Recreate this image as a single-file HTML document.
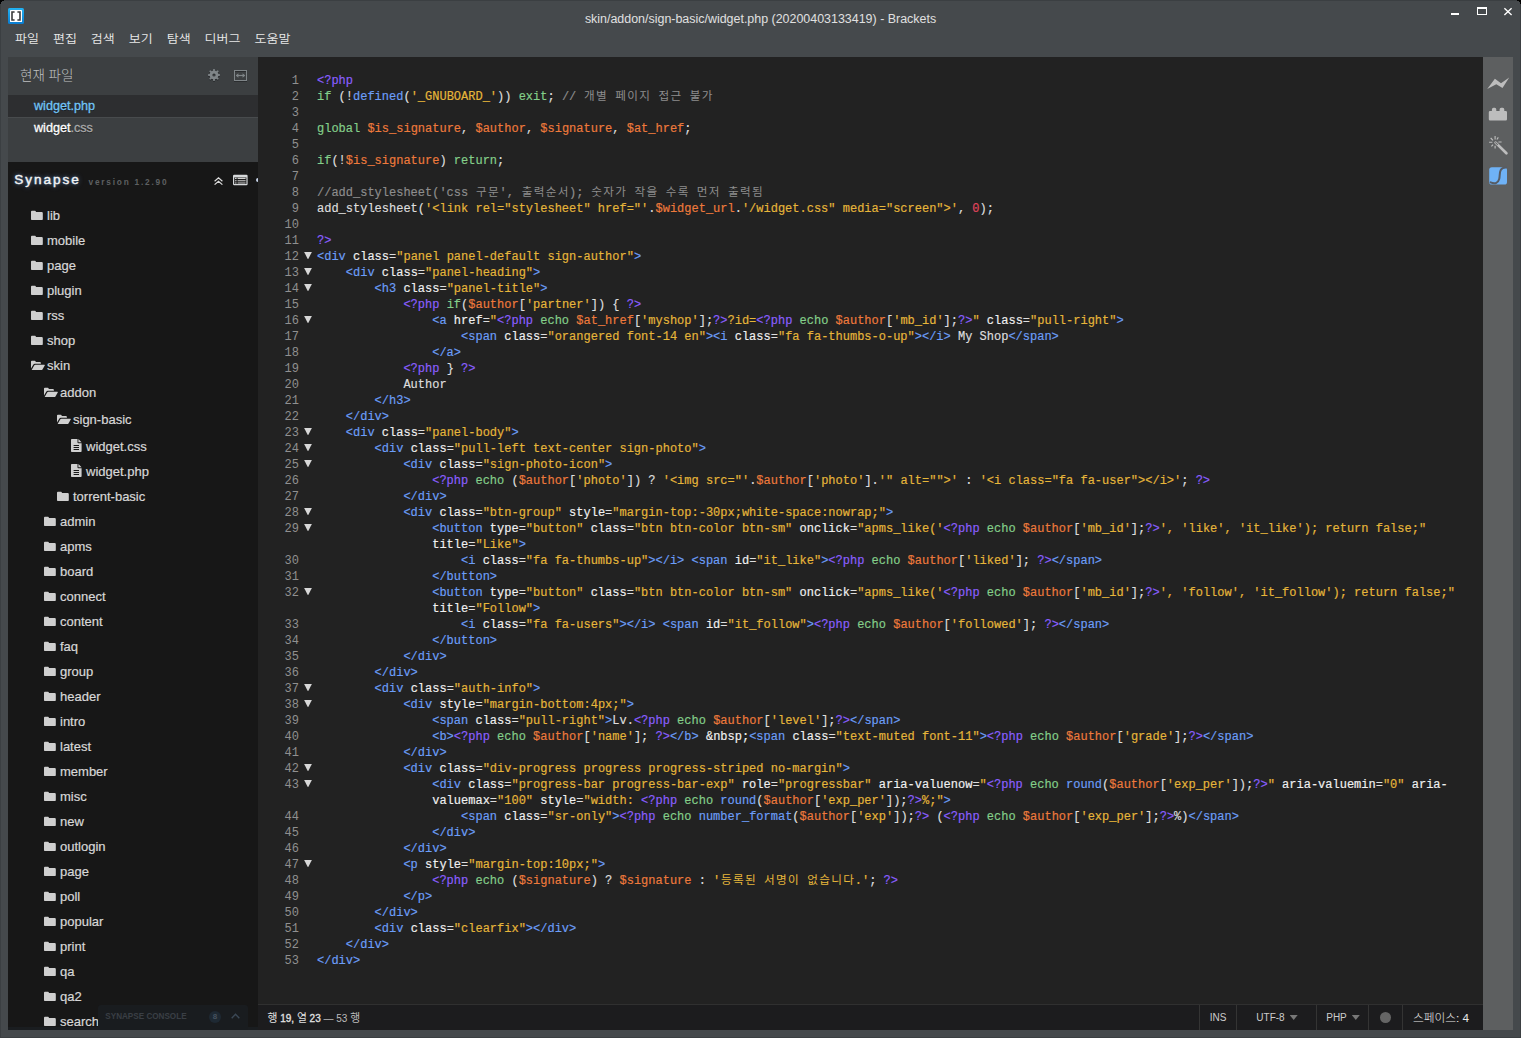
<!DOCTYPE html>
<html lang="ko">
<head>
<meta charset="utf-8">
<title>skin/addon/sign-basic/widget.php (20200403133419) - Brackets</title>
<style>
*{box-sizing:border-box}
html,body{margin:0;padding:0}
body{width:1521px;height:1038px;overflow:hidden;background:#45494c;position:relative;font-family:"Liberation Sans","Noto Sans CJK KR",sans-serif;color:#ddd}
.abs{position:absolute}
#frame{left:0;top:0;width:1521px;height:1038px;box-shadow:inset 0 0 0 1px #3b3f42;pointer-events:none}
.cr{position:absolute;background:#000;height:1px}
#appicon{left:8px;top:8px;width:16px;height:16px}
#title{left:0;width:1521px;top:10.7px;text-align:center;font-size:12.45px;line-height:16px;color:#e0e0e0}
#winctl{right:0;top:0}
#menu{left:8px;top:29px;height:20px;font-size:13px;line-height:18px;font-weight:350;color:#e8e8e8;white-space:nowrap;font-family:"Noto Sans CJK KR","Liberation Sans",sans-serif;transform:scaleY(.885);transform-origin:0 50%}
#menu span{display:inline-block;padding:0 7px}
#sidebar{left:8px;top:57px;width:250px;height:973px;background:#171717;overflow:hidden}
#ws{left:0;top:0;width:250px;height:105px;background:#3c3f41}
#ws h4{position:absolute;left:12px;top:7px;margin:0;font-weight:300;font-size:13.5px;line-height:20px;color:#bfc0c0;font-family:"Noto Sans CJK KR","Liberation Sans",sans-serif}
.wsi{position:absolute;left:0;width:250px;height:22px;padding-left:26px;font-size:12.6px;line-height:22px;color:#fff;text-shadow:0 1px 0 rgba(0,0,0,.5)}
.wsi.sel{background:#2d2e30;color:#72c4f6}
.wsi em{font-style:normal;color:#aaa}
.wsi.sel em{color:#72c4f6}
#syn{left:0;top:105px;width:250px;height:868px;background:#171717}
#synname{left:6.3px;top:9px;font-size:13.6px;font-weight:normal;-webkit-text-stroke:.35px;letter-spacing:1.95px;color:#f4f4f4;line-height:18px;text-shadow:0 0 5px rgba(120,170,230,.75),0 0 2px rgba(120,170,230,.5)}
#synver{left:80.5px;top:13px;font-size:8.3px;font-weight:bold;letter-spacing:1.78px;color:#5e6062;line-height:14px}
.ti{-webkit-text-stroke:.2px}.wsi{-webkit-text-stroke:.3px}
.ti{position:absolute;height:24px;line-height:26px;font-size:13px;color:#d8d8d8;white-space:nowrap}
.ti span{position:absolute;left:16px;top:0}
.ic{position:absolute;left:0;top:6.5px;width:12px;height:10.5px;fill:#cfcfcf}
.ic.io{width:14px}
.ic.id{width:11px;height:13px;top:5px;left:1px}
#editor{left:258px;top:57px;width:1225px;height:947px;background:#222222;overflow:hidden}
#code{-webkit-text-stroke:.17px;position:absolute;left:0;top:16px;width:1225px;font-family:"Liberation Mono","Noto Sans CJK KR",monospace;font-size:12px;line-height:16px;color:#dedede}
.ln{position:relative;height:16px;padding-left:59px;white-space:pre}
.no{position:absolute;left:0;width:41px;text-align:right;font-weight:normal;color:#909090;-webkit-text-stroke:0}
.fd{position:absolute;left:46px;top:2.8px;width:8px;height:7.6px;background:#d8d8d8;clip-path:polygon(0 0,100% 0,50% 100%)}
.h{font-size:11.6px;line-height:16px;letter-spacing:1.33px;margin-left:.6px;margin-right:-.6px;font-weight:400;-webkit-text-stroke:0}.k{color:#84cf8a}.v{color:#ee7a3c}.s{color:#e6b63a}.m{color:#8a5fff}.t{color:#6c9ef8}.a{color:#f0f0f0}.b{color:#6c9ef8}.c{color:#8d8d8d}.n{color:#e0455e}
#status{left:258px;top:1004px;width:1225px;height:26px;background:#1c1c1e;border-top:1px solid #303030;font-size:10px;color:#ccc;line-height:25px}
#status .cell{position:absolute;top:0;height:25px;border-left:1px solid #343434;text-align:center;white-space:nowrap}
#stl{left:9.5px;top:0;font-size:10px;color:#e2e2e2;white-space:pre;font-family:"Noto Sans CJK KR","Liberation Sans",sans-serif;font-size:10.8px;line-height:25px}
#stl .w,#stl .w2{font-family:"Liberation Sans",sans-serif;font-size:10px;letter-spacing:0}#stl .w{-webkit-text-stroke:.3px}
#stl .w2{color:#bbb}
.dd{position:absolute;top:10px;margin-left:5px;width:8px;height:5px;background:#777;clip-path:polygon(0 0,100% 0,50% 100%)}
.dot{position:absolute;left:10.5px;top:6.5px;width:11.5px;height:11.5px;border-radius:50%;background:#656565}
#console{left:98px;top:1005px;width:150px;height:25px;background:#191c1f;border-radius:3px 3px 0 0}
#cst{left:7.3px;top:5.5px;font-size:8.15px;line-height:12px;font-weight:bold;color:#3a3f45;white-space:nowrap}
#csb{left:111px;top:5.5px;width:12px;height:12px;border-radius:6px;background:#1e2933;color:#46525e;font-size:8px;line-height:12px;font-weight:bold;text-align:center}
#toolbar{left:1483px;top:57px;width:30px;height:973px;background:#5d5f60}
</style>
</head>
<body>
<div id="frame" class="abs"></div>
<i class="cr" style="left:0;top:0;width:4px"></i><i class="cr" style="left:0;top:1px;width:2px"></i><i class="cr" style="left:0;top:2px;width:1px"></i><i class="cr" style="left:0;top:3px;width:1px"></i>
<i class="cr" style="right:0;top:0;width:4px"></i><i class="cr" style="right:0;top:1px;width:2px"></i><i class="cr" style="right:0;top:2px;width:1px"></i><i class="cr" style="right:0;top:3px;width:1px"></i>
<svg id="appicon" class="abs" viewBox="0 0 16 16"><defs><linearGradient id="bl" x1="0" y1="0" x2="0" y2="1"><stop offset="0" stop-color="#22b2f2"/><stop offset="1" stop-color="#0a7cd0"/></linearGradient></defs><rect x="0" y="0" width="16" height="16" rx="1.6" fill="url(#bl)"/><rect x="2" y="2" width="12" height="12" rx=".6" fill="#fff"/><path d="M3.2 3.2H6.6V4.8H4.8V11.2H6.6V12.8H3.2ZM12.8 3.2H9.4V4.8H11.2V11.2H9.4V12.8H12.8Z" fill="#3a3a3a"/></svg>
<div id="title" class="abs">skin/addon/sign-basic/widget.php (20200403133419) - Brackets</div>
<svg id="winctl" class="abs" width="80" height="26" viewBox="1441 0 80 26"><rect x="1451" y="13" width="8" height="2" fill="#fff"/><path fill="#fff" fill-rule="evenodd" d="M1477 7H1487V15H1477ZM1478 9V14H1486V9Z"/><path d="M1504.4 8.2 1511.6 15M1511.6 8.2 1504.4 15" stroke="#fff" stroke-width="1.35" fill="none"/></svg>
<div id="menu" class="abs"><span>파일</span><span>편집</span><span>검색</span><span>보기</span><span>탐색</span><span>디버그</span><span>도움말</span></div>

<div id="sidebar" class="abs">
 <div id="ws" class="abs">
  <h4>현재 파일</h4>
  <svg class="abs" style="left:200px;top:12px" width="12" height="14" viewBox="0 0 12 14"><path fill="#2a2c2e" fill-rule="evenodd" transform="translate(0,1)" d="M5.07 1.70 5.24 -0.05 6.76 -0.05 6.93 1.70 8.39 2.30 9.74 1.18 10.82 2.26 9.70 3.61 10.30 5.07 12.05 5.24 12.05 6.76 10.30 6.93 9.70 8.39 10.82 9.74 9.74 10.82 8.39 9.70 6.93 10.30 6.76 12.05 5.24 12.05 5.07 10.30 3.61 9.70 2.26 10.82 1.18 9.74 2.30 8.39 1.70 6.93 -0.05 6.76 -0.05 5.24 1.70 5.07 2.30 3.61 1.18 2.26 2.26 1.18 3.61 2.30ZM6.00 4.40A1.60 1.60 0 1 0 6.00 7.60A1.60 1.60 0 1 0 6.00 4.40Z"/><path fill="#7f8588" fill-rule="evenodd" d="M5.07 1.70 5.24 -0.05 6.76 -0.05 6.93 1.70 8.39 2.30 9.74 1.18 10.82 2.26 9.70 3.61 10.30 5.07 12.05 5.24 12.05 6.76 10.30 6.93 9.70 8.39 10.82 9.74 9.74 10.82 8.39 9.70 6.93 10.30 6.76 12.05 5.24 12.05 5.07 10.30 3.61 9.70 2.26 10.82 1.18 9.74 2.30 8.39 1.70 6.93 -0.05 6.76 -0.05 5.24 1.70 5.07 2.30 3.61 1.18 2.26 2.26 1.18 3.61 2.30ZM6.00 4.40A1.60 1.60 0 1 0 6.00 7.60A1.60 1.60 0 1 0 6.00 4.40Z"/></svg>
  <svg class="abs" style="left:226px;top:13px" width="13" height="12" viewBox="0 0 13 12"><rect x=".5" y="1.5" width="12" height="10" fill="none" stroke="#2a2c2e"/><rect x=".5" y=".5" width="12" height="10" fill="none" stroke="#7f8588"/><path d="M2.2 5.5H10.8" stroke="#7f8588" stroke-width="1.2" fill="none"/><path d="M1.8 5.5 4.4 3.2V7.8ZM11.2 5.5 8.6 3.2V7.8Z" fill="#7f8588"/></svg>
  <div class="wsi sel" style="top:38px">widget<em>.php</em></div>
  <div class="abs" style="left:0;top:60px;width:250px;height:1px;background:#484b4d"></div>
  <div class="wsi" style="top:60px">widget<em>.css</em></div>
 </div>
 <div id="syn" class="abs">
  <div id="synname" class="abs">Synapse</div>
  <div id="synver" class="abs">version 1.2.90</div>
  <svg class="abs" style="left:206px;top:14.5px" width="9" height="8" viewBox="0 0 9 8"><path d="M.6 4.2 4.5 .8 8.4 4.2M.6 7.6 4.5 4.2 8.4 7.6" stroke="#dcdcdc" stroke-width="1.2" fill="none"/></svg>
  <svg class="abs" style="left:225px;top:12px" width="15" height="12" viewBox="0 0 15 12"><rect x="0" y=".7" width="14.6" height="10.5" rx="1.2" fill="#d6d8da"/><rect x="1.2" y="3.4" width="12.2" height="6.6" fill="#1c1c1c"/><path d="M2 4.4H3.6M2 6.7H3.6M2 9H3.6M4.6 4.4H12.6M4.6 6.7H12.6M4.6 9H12.6" stroke="#d0d0d0" stroke-width="1.15"/></svg>
  <div class="abs" style="left:248px;top:15.7px;width:4px;height:4px;border-radius:2px;background:#c8d4ea"></div>
 </div>
</div>
<div id="tree" class="abs" style="left:0;top:0">
<div class="ti" style="left:31px;top:203px"><svg class="ic" viewBox="0 0 13 11"><path d="M0 1.6Q0 .6 1 .6H4.3Q5.3 .6 5.3 1.6V2H11.6Q12.8 2 12.8 3.2V9.6Q12.8 10.8 11.6 10.8H1.2Q0 10.8 0 9.6Z"/></svg><span>lib</span></div>
<div class="ti" style="left:31px;top:228px"><svg class="ic" viewBox="0 0 13 11"><path d="M0 1.6Q0 .6 1 .6H4.3Q5.3 .6 5.3 1.6V2H11.6Q12.8 2 12.8 3.2V9.6Q12.8 10.8 11.6 10.8H1.2Q0 10.8 0 9.6Z"/></svg><span>mobile</span></div>
<div class="ti" style="left:31px;top:253px"><svg class="ic" viewBox="0 0 13 11"><path d="M0 1.6Q0 .6 1 .6H4.3Q5.3 .6 5.3 1.6V2H11.6Q12.8 2 12.8 3.2V9.6Q12.8 10.8 11.6 10.8H1.2Q0 10.8 0 9.6Z"/></svg><span>page</span></div>
<div class="ti" style="left:31px;top:278px"><svg class="ic" viewBox="0 0 13 11"><path d="M0 1.6Q0 .6 1 .6H4.3Q5.3 .6 5.3 1.6V2H11.6Q12.8 2 12.8 3.2V9.6Q12.8 10.8 11.6 10.8H1.2Q0 10.8 0 9.6Z"/></svg><span>plugin</span></div>
<div class="ti" style="left:31px;top:303px"><svg class="ic" viewBox="0 0 13 11"><path d="M0 1.6Q0 .6 1 .6H4.3Q5.3 .6 5.3 1.6V2H11.6Q12.8 2 12.8 3.2V9.6Q12.8 10.8 11.6 10.8H1.2Q0 10.8 0 9.6Z"/></svg><span>rss</span></div>
<div class="ti" style="left:31px;top:328px"><svg class="ic" viewBox="0 0 13 11"><path d="M0 1.6Q0 .6 1 .6H4.3Q5.3 .6 5.3 1.6V2H11.6Q12.8 2 12.8 3.2V9.6Q12.8 10.8 11.6 10.8H1.2Q0 10.8 0 9.6Z"/></svg><span>shop</span></div>
<div class="ti" style="left:31px;top:353px"><svg class="ic io" viewBox="0 0 15 11"><path d="M0 1.6Q0 .6 1 .6H4Q5 .6 5 1.6V2H9.6Q10.6 2 10.6 3V4H4.2Q3 4 2.4 5L0 9Z"/><path d="M.6 10.8 3.4 5.8Q3.8 5 4.8 5H14.2Q15.2 5 14.7 5.8L12.3 10Q11.8 10.8 10.8 10.8Z"/></svg><span>skin</span></div>
<div class="ti" style="left:44px;top:380px"><svg class="ic io" viewBox="0 0 15 11"><path d="M0 1.6Q0 .6 1 .6H4Q5 .6 5 1.6V2H9.6Q10.6 2 10.6 3V4H4.2Q3 4 2.4 5L0 9Z"/><path d="M.6 10.8 3.4 5.8Q3.8 5 4.8 5H14.2Q15.2 5 14.7 5.8L12.3 10Q11.8 10.8 10.8 10.8Z"/></svg><span>addon</span></div>
<div class="ti" style="left:57px;top:407px"><svg class="ic io" viewBox="0 0 15 11"><path d="M0 1.6Q0 .6 1 .6H4Q5 .6 5 1.6V2H9.6Q10.6 2 10.6 3V4H4.2Q3 4 2.4 5L0 9Z"/><path d="M.6 10.8 3.4 5.8Q3.8 5 4.8 5H14.2Q15.2 5 14.7 5.8L12.3 10Q11.8 10.8 10.8 10.8Z"/></svg><span>sign-basic</span></div>
<div class="ti" style="left:70px;top:434px"><svg class="ic id" viewBox="0 0 11 13"><path fill-rule="evenodd" d="M.8 0H6.5V3.5Q6.5 4.3 7.3 4.3H10.6V12.2Q10.6 13 9.8 13H.8Q0 13 0 12.2V.8Q0 0 .8 0ZM7.4 0 10.6 3.3H7.4ZM2.6 6H8V6.9H2.6ZM2.6 8H8V8.9H2.6ZM2.6 10H8V10.9H2.6Z"/></svg><span>widget.css</span></div>
<div class="ti" style="left:70px;top:459px"><svg class="ic id" viewBox="0 0 11 13"><path fill-rule="evenodd" d="M.8 0H6.5V3.5Q6.5 4.3 7.3 4.3H10.6V12.2Q10.6 13 9.8 13H.8Q0 13 0 12.2V.8Q0 0 .8 0ZM7.4 0 10.6 3.3H7.4ZM2.6 6H8V6.9H2.6ZM2.6 8H8V8.9H2.6ZM2.6 10H8V10.9H2.6Z"/></svg><span>widget.php</span></div>
<div class="ti" style="left:57px;top:484px"><svg class="ic" viewBox="0 0 13 11"><path d="M0 1.6Q0 .6 1 .6H4.3Q5.3 .6 5.3 1.6V2H11.6Q12.8 2 12.8 3.2V9.6Q12.8 10.8 11.6 10.8H1.2Q0 10.8 0 9.6Z"/></svg><span>torrent-basic</span></div>
<div class="ti" style="left:44px;top:509px"><svg class="ic" viewBox="0 0 13 11"><path d="M0 1.6Q0 .6 1 .6H4.3Q5.3 .6 5.3 1.6V2H11.6Q12.8 2 12.8 3.2V9.6Q12.8 10.8 11.6 10.8H1.2Q0 10.8 0 9.6Z"/></svg><span>admin</span></div>
<div class="ti" style="left:44px;top:534px"><svg class="ic" viewBox="0 0 13 11"><path d="M0 1.6Q0 .6 1 .6H4.3Q5.3 .6 5.3 1.6V2H11.6Q12.8 2 12.8 3.2V9.6Q12.8 10.8 11.6 10.8H1.2Q0 10.8 0 9.6Z"/></svg><span>apms</span></div>
<div class="ti" style="left:44px;top:559px"><svg class="ic" viewBox="0 0 13 11"><path d="M0 1.6Q0 .6 1 .6H4.3Q5.3 .6 5.3 1.6V2H11.6Q12.8 2 12.8 3.2V9.6Q12.8 10.8 11.6 10.8H1.2Q0 10.8 0 9.6Z"/></svg><span>board</span></div>
<div class="ti" style="left:44px;top:584px"><svg class="ic" viewBox="0 0 13 11"><path d="M0 1.6Q0 .6 1 .6H4.3Q5.3 .6 5.3 1.6V2H11.6Q12.8 2 12.8 3.2V9.6Q12.8 10.8 11.6 10.8H1.2Q0 10.8 0 9.6Z"/></svg><span>connect</span></div>
<div class="ti" style="left:44px;top:609px"><svg class="ic" viewBox="0 0 13 11"><path d="M0 1.6Q0 .6 1 .6H4.3Q5.3 .6 5.3 1.6V2H11.6Q12.8 2 12.8 3.2V9.6Q12.8 10.8 11.6 10.8H1.2Q0 10.8 0 9.6Z"/></svg><span>content</span></div>
<div class="ti" style="left:44px;top:634px"><svg class="ic" viewBox="0 0 13 11"><path d="M0 1.6Q0 .6 1 .6H4.3Q5.3 .6 5.3 1.6V2H11.6Q12.8 2 12.8 3.2V9.6Q12.8 10.8 11.6 10.8H1.2Q0 10.8 0 9.6Z"/></svg><span>faq</span></div>
<div class="ti" style="left:44px;top:659px"><svg class="ic" viewBox="0 0 13 11"><path d="M0 1.6Q0 .6 1 .6H4.3Q5.3 .6 5.3 1.6V2H11.6Q12.8 2 12.8 3.2V9.6Q12.8 10.8 11.6 10.8H1.2Q0 10.8 0 9.6Z"/></svg><span>group</span></div>
<div class="ti" style="left:44px;top:684px"><svg class="ic" viewBox="0 0 13 11"><path d="M0 1.6Q0 .6 1 .6H4.3Q5.3 .6 5.3 1.6V2H11.6Q12.8 2 12.8 3.2V9.6Q12.8 10.8 11.6 10.8H1.2Q0 10.8 0 9.6Z"/></svg><span>header</span></div>
<div class="ti" style="left:44px;top:709px"><svg class="ic" viewBox="0 0 13 11"><path d="M0 1.6Q0 .6 1 .6H4.3Q5.3 .6 5.3 1.6V2H11.6Q12.8 2 12.8 3.2V9.6Q12.8 10.8 11.6 10.8H1.2Q0 10.8 0 9.6Z"/></svg><span>intro</span></div>
<div class="ti" style="left:44px;top:734px"><svg class="ic" viewBox="0 0 13 11"><path d="M0 1.6Q0 .6 1 .6H4.3Q5.3 .6 5.3 1.6V2H11.6Q12.8 2 12.8 3.2V9.6Q12.8 10.8 11.6 10.8H1.2Q0 10.8 0 9.6Z"/></svg><span>latest</span></div>
<div class="ti" style="left:44px;top:759px"><svg class="ic" viewBox="0 0 13 11"><path d="M0 1.6Q0 .6 1 .6H4.3Q5.3 .6 5.3 1.6V2H11.6Q12.8 2 12.8 3.2V9.6Q12.8 10.8 11.6 10.8H1.2Q0 10.8 0 9.6Z"/></svg><span>member</span></div>
<div class="ti" style="left:44px;top:784px"><svg class="ic" viewBox="0 0 13 11"><path d="M0 1.6Q0 .6 1 .6H4.3Q5.3 .6 5.3 1.6V2H11.6Q12.8 2 12.8 3.2V9.6Q12.8 10.8 11.6 10.8H1.2Q0 10.8 0 9.6Z"/></svg><span>misc</span></div>
<div class="ti" style="left:44px;top:809px"><svg class="ic" viewBox="0 0 13 11"><path d="M0 1.6Q0 .6 1 .6H4.3Q5.3 .6 5.3 1.6V2H11.6Q12.8 2 12.8 3.2V9.6Q12.8 10.8 11.6 10.8H1.2Q0 10.8 0 9.6Z"/></svg><span>new</span></div>
<div class="ti" style="left:44px;top:834px"><svg class="ic" viewBox="0 0 13 11"><path d="M0 1.6Q0 .6 1 .6H4.3Q5.3 .6 5.3 1.6V2H11.6Q12.8 2 12.8 3.2V9.6Q12.8 10.8 11.6 10.8H1.2Q0 10.8 0 9.6Z"/></svg><span>outlogin</span></div>
<div class="ti" style="left:44px;top:859px"><svg class="ic" viewBox="0 0 13 11"><path d="M0 1.6Q0 .6 1 .6H4.3Q5.3 .6 5.3 1.6V2H11.6Q12.8 2 12.8 3.2V9.6Q12.8 10.8 11.6 10.8H1.2Q0 10.8 0 9.6Z"/></svg><span>page</span></div>
<div class="ti" style="left:44px;top:884px"><svg class="ic" viewBox="0 0 13 11"><path d="M0 1.6Q0 .6 1 .6H4.3Q5.3 .6 5.3 1.6V2H11.6Q12.8 2 12.8 3.2V9.6Q12.8 10.8 11.6 10.8H1.2Q0 10.8 0 9.6Z"/></svg><span>poll</span></div>
<div class="ti" style="left:44px;top:909px"><svg class="ic" viewBox="0 0 13 11"><path d="M0 1.6Q0 .6 1 .6H4.3Q5.3 .6 5.3 1.6V2H11.6Q12.8 2 12.8 3.2V9.6Q12.8 10.8 11.6 10.8H1.2Q0 10.8 0 9.6Z"/></svg><span>popular</span></div>
<div class="ti" style="left:44px;top:934px"><svg class="ic" viewBox="0 0 13 11"><path d="M0 1.6Q0 .6 1 .6H4.3Q5.3 .6 5.3 1.6V2H11.6Q12.8 2 12.8 3.2V9.6Q12.8 10.8 11.6 10.8H1.2Q0 10.8 0 9.6Z"/></svg><span>print</span></div>
<div class="ti" style="left:44px;top:959px"><svg class="ic" viewBox="0 0 13 11"><path d="M0 1.6Q0 .6 1 .6H4.3Q5.3 .6 5.3 1.6V2H11.6Q12.8 2 12.8 3.2V9.6Q12.8 10.8 11.6 10.8H1.2Q0 10.8 0 9.6Z"/></svg><span>qa</span></div>
<div class="ti" style="left:44px;top:984px"><svg class="ic" viewBox="0 0 13 11"><path d="M0 1.6Q0 .6 1 .6H4.3Q5.3 .6 5.3 1.6V2H11.6Q12.8 2 12.8 3.2V9.6Q12.8 10.8 11.6 10.8H1.2Q0 10.8 0 9.6Z"/></svg><span>qa2</span></div>
<div class="ti" style="left:44px;top:1009px"><svg class="ic" viewBox="0 0 13 11"><path d="M0 1.6Q0 .6 1 .6H4.3Q5.3 .6 5.3 1.6V2H11.6Q12.8 2 12.8 3.2V9.6Q12.8 10.8 11.6 10.8H1.2Q0 10.8 0 9.6Z"/></svg><span>search</span></div>
</div>

<div id="editor" class="abs"><div id="code">
<div class="ln"><b class="no">1</b><span class="m">&lt;?php</span></div>
<div class="ln"><b class="no">2</b><span class="k">if</span> (!<span class="b">defined</span>(<span class="s">'_GNUBOARD_'</span>)) <span class="k">exit</span>; <span class="c">// <span class="h">개별</span> <span class="h">페이지</span> <span class="h">접근</span> <span class="h">불가</span></span></div>
<div class="ln"><b class="no">3</b> </div>
<div class="ln"><b class="no">4</b><span class="k">global</span> <span class="v">$is_signature</span>, <span class="v">$author</span>, <span class="v">$signature</span>, <span class="v">$at_href</span>;</div>
<div class="ln"><b class="no">5</b> </div>
<div class="ln"><b class="no">6</b><span class="k">if</span>(!<span class="v">$is_signature</span>) <span class="k">return</span>;</div>
<div class="ln"><b class="no">7</b> </div>
<div class="ln"><b class="no">8</b><span class="c">//add_stylesheet('css <span class="h">구문</span>', <span class="h">출력순서</span>); <span class="h">숫자가</span> <span class="h">작을</span> <span class="h">수록</span> <span class="h">먼저</span> <span class="h">출력됨</span></span></div>
<div class="ln"><b class="no">9</b>add_stylesheet(<span class="s">'&lt;link rel="stylesheet" href="'</span>.<span class="v">$widget_url</span>.<span class="s">'/widget.css" media="screen"&gt;'</span>, <span class="n">0</span>);</div>
<div class="ln"><b class="no">10</b> </div>
<div class="ln"><b class="no">11</b><span class="m">?&gt;</span></div>
<div class="ln"><b class="no">12</b><i class="fd"></i><span class="t">&lt;div</span> <span class="a">class</span>=<span class="s">"panel panel-default sign-author"</span><span class="t">&gt;</span></div>
<div class="ln"><b class="no">13</b><i class="fd"></i>    <span class="t">&lt;div</span> <span class="a">class</span>=<span class="s">"panel-heading"</span><span class="t">&gt;</span></div>
<div class="ln"><b class="no">14</b><i class="fd"></i>        <span class="t">&lt;h3</span> <span class="a">class</span>=<span class="s">"panel-title"</span><span class="t">&gt;</span></div>
<div class="ln"><b class="no">15</b>            <span class="m">&lt;?php</span> <span class="k">if</span>(<span class="v">$author</span>[<span class="s">'partner'</span>]) { <span class="m">?&gt;</span></div>
<div class="ln"><b class="no">16</b><i class="fd"></i>                <span class="t">&lt;a</span> <span class="a">href</span>=<span class="s">"</span><span class="m">&lt;?php</span> <span class="k">echo</span> <span class="v">$at_href</span>[<span class="s">'myshop'</span>];<span class="m">?&gt;</span><span class="s">?id=</span><span class="m">&lt;?php</span> <span class="k">echo</span> <span class="v">$author</span>[<span class="s">'mb_id'</span>];<span class="m">?&gt;</span><span class="s">"</span> <span class="a">class</span>=<span class="s">"pull-right"</span><span class="t">&gt;</span></div>
<div class="ln"><b class="no">17</b>                    <span class="t">&lt;span</span> <span class="a">class</span>=<span class="s">"orangered font-14 en"</span><span class="t">&gt;</span><span class="t">&lt;i</span> <span class="a">class</span>=<span class="s">"fa fa-thumbs-o-up"</span><span class="t">&gt;</span><span class="t">&lt;/i&gt;</span> My Shop<span class="t">&lt;/span&gt;</span></div>
<div class="ln"><b class="no">18</b>                <span class="t">&lt;/a&gt;</span></div>
<div class="ln"><b class="no">19</b>            <span class="m">&lt;?php</span> } <span class="m">?&gt;</span></div>
<div class="ln"><b class="no">20</b>            Author</div>
<div class="ln"><b class="no">21</b>        <span class="t">&lt;/h3&gt;</span></div>
<div class="ln"><b class="no">22</b>    <span class="t">&lt;/div&gt;</span></div>
<div class="ln"><b class="no">23</b><i class="fd"></i>    <span class="t">&lt;div</span> <span class="a">class</span>=<span class="s">"panel-body"</span><span class="t">&gt;</span></div>
<div class="ln"><b class="no">24</b><i class="fd"></i>        <span class="t">&lt;div</span> <span class="a">class</span>=<span class="s">"pull-left text-center sign-photo"</span><span class="t">&gt;</span></div>
<div class="ln"><b class="no">25</b><i class="fd"></i>            <span class="t">&lt;div</span> <span class="a">class</span>=<span class="s">"sign-photo-icon"</span><span class="t">&gt;</span></div>
<div class="ln"><b class="no">26</b>                <span class="m">&lt;?php</span> <span class="k">echo</span> (<span class="v">$author</span>[<span class="s">'photo'</span>]) ? <span class="s">'&lt;img src="'</span>.<span class="v">$author</span>[<span class="s">'photo'</span>].<span class="s">'" alt=""&gt;'</span> : <span class="s">'&lt;i class="fa fa-user"&gt;&lt;/i&gt;'</span>; <span class="m">?&gt;</span></div>
<div class="ln"><b class="no">27</b>            <span class="t">&lt;/div&gt;</span></div>
<div class="ln"><b class="no">28</b><i class="fd"></i>            <span class="t">&lt;div</span> <span class="a">class</span>=<span class="s">"btn-group"</span> <span class="a">style</span>=<span class="s">"margin-top:-30px;white-space:nowrap;"</span><span class="t">&gt;</span></div>
<div class="ln"><b class="no">29</b><i class="fd"></i>                <span class="t">&lt;button</span> <span class="a">type</span>=<span class="s">"button"</span> <span class="a">class</span>=<span class="s">"btn btn-color btn-sm"</span> <span class="a">onclick</span>=<span class="s">"apms_like('</span><span class="m">&lt;?php</span> <span class="k">echo</span> <span class="v">$author</span>[<span class="s">'mb_id'</span>];<span class="m">?&gt;</span><span class="s">', 'like', 'it_like'); return false;"</span></div>
<div class="ln">                <span class="a">title</span>=<span class="s">"Like"</span><span class="t">&gt;</span></div>
<div class="ln"><b class="no">30</b>                    <span class="t">&lt;i</span> <span class="a">class</span>=<span class="s">"fa fa-thumbs-up"</span><span class="t">&gt;</span><span class="t">&lt;/i&gt;</span> <span class="t">&lt;span</span> <span class="a">id</span>=<span class="s">"it_like"</span><span class="t">&gt;</span><span class="m">&lt;?php</span> <span class="k">echo</span> <span class="v">$author</span>[<span class="s">'liked'</span>]; <span class="m">?&gt;</span><span class="t">&lt;/span&gt;</span></div>
<div class="ln"><b class="no">31</b>                <span class="t">&lt;/button&gt;</span></div>
<div class="ln"><b class="no">32</b><i class="fd"></i>                <span class="t">&lt;button</span> <span class="a">type</span>=<span class="s">"button"</span> <span class="a">class</span>=<span class="s">"btn btn-color btn-sm"</span> <span class="a">onclick</span>=<span class="s">"apms_like('</span><span class="m">&lt;?php</span> <span class="k">echo</span> <span class="v">$author</span>[<span class="s">'mb_id'</span>];<span class="m">?&gt;</span><span class="s">', 'follow', 'it_follow'); return false;"</span></div>
<div class="ln">                <span class="a">title</span>=<span class="s">"Follow"</span><span class="t">&gt;</span></div>
<div class="ln"><b class="no">33</b>                    <span class="t">&lt;i</span> <span class="a">class</span>=<span class="s">"fa fa-users"</span><span class="t">&gt;</span><span class="t">&lt;/i&gt;</span> <span class="t">&lt;span</span> <span class="a">id</span>=<span class="s">"it_follow"</span><span class="t">&gt;</span><span class="m">&lt;?php</span> <span class="k">echo</span> <span class="v">$author</span>[<span class="s">'followed'</span>]; <span class="m">?&gt;</span><span class="t">&lt;/span&gt;</span></div>
<div class="ln"><b class="no">34</b>                <span class="t">&lt;/button&gt;</span></div>
<div class="ln"><b class="no">35</b>            <span class="t">&lt;/div&gt;</span></div>
<div class="ln"><b class="no">36</b>        <span class="t">&lt;/div&gt;</span></div>
<div class="ln"><b class="no">37</b><i class="fd"></i>        <span class="t">&lt;div</span> <span class="a">class</span>=<span class="s">"auth-info"</span><span class="t">&gt;</span></div>
<div class="ln"><b class="no">38</b><i class="fd"></i>            <span class="t">&lt;div</span> <span class="a">style</span>=<span class="s">"margin-bottom:4px;"</span><span class="t">&gt;</span></div>
<div class="ln"><b class="no">39</b>                <span class="t">&lt;span</span> <span class="a">class</span>=<span class="s">"pull-right"</span><span class="t">&gt;</span>Lv.<span class="m">&lt;?php</span> <span class="k">echo</span> <span class="v">$author</span>[<span class="s">'level'</span>];<span class="m">?&gt;</span><span class="t">&lt;/span&gt;</span></div>
<div class="ln"><b class="no">40</b>                <span class="t">&lt;b&gt;</span><span class="m">&lt;?php</span> <span class="k">echo</span> <span class="v">$author</span>[<span class="s">'name'</span>]; <span class="m">?&gt;</span><span class="t">&lt;/b&gt;</span> <span class="a">&amp;nbsp;</span><span class="t">&lt;span</span> <span class="a">class</span>=<span class="s">"text-muted font-11"</span><span class="t">&gt;</span><span class="m">&lt;?php</span> <span class="k">echo</span> <span class="v">$author</span>[<span class="s">'grade'</span>];<span class="m">?&gt;</span><span class="t">&lt;/span&gt;</span></div>
<div class="ln"><b class="no">41</b>            <span class="t">&lt;/div&gt;</span></div>
<div class="ln"><b class="no">42</b><i class="fd"></i>            <span class="t">&lt;div</span> <span class="a">class</span>=<span class="s">"div-progress progress progress-striped no-margin"</span><span class="t">&gt;</span></div>
<div class="ln"><b class="no">43</b><i class="fd"></i>                <span class="t">&lt;div</span> <span class="a">class</span>=<span class="s">"progress-bar progress-bar-exp"</span> <span class="a">role</span>=<span class="s">"progressbar"</span> <span class="a">aria-valuenow</span>=<span class="s">"</span><span class="m">&lt;?php</span> <span class="k">echo</span> <span class="b">round</span>(<span class="v">$author</span>[<span class="s">'exp_per'</span>]);<span class="m">?&gt;</span><span class="s">"</span> <span class="a">aria-valuemin</span>=<span class="s">"0"</span> <span class="a">aria-</span></div>
<div class="ln">                <span class="a">valuemax</span>=<span class="s">"100"</span> <span class="a">style</span>=<span class="s">"width: </span><span class="m">&lt;?php</span> <span class="k">echo</span> <span class="b">round</span>(<span class="v">$author</span>[<span class="s">'exp_per'</span>]);<span class="m">?&gt;</span><span class="s">%;"</span><span class="t">&gt;</span></div>
<div class="ln"><b class="no">44</b>                    <span class="t">&lt;span</span> <span class="a">class</span>=<span class="s">"sr-only"</span><span class="t">&gt;</span><span class="m">&lt;?php</span> <span class="k">echo</span> <span class="b">number_format</span>(<span class="v">$author</span>[<span class="s">'exp'</span>]);<span class="m">?&gt;</span> (<span class="m">&lt;?php</span> <span class="k">echo</span> <span class="v">$author</span>[<span class="s">'exp_per'</span>];<span class="m">?&gt;</span>%)<span class="t">&lt;/span&gt;</span></div>
<div class="ln"><b class="no">45</b>                <span class="t">&lt;/div&gt;</span></div>
<div class="ln"><b class="no">46</b>            <span class="t">&lt;/div&gt;</span></div>
<div class="ln"><b class="no">47</b><i class="fd"></i>            <span class="t">&lt;p</span> <span class="a">style</span>=<span class="s">"margin-top:10px;"</span><span class="t">&gt;</span></div>
<div class="ln"><b class="no">48</b>                <span class="m">&lt;?php</span> <span class="k">echo</span> (<span class="v">$signature</span>) ? <span class="v">$signature</span> : <span class="s">'<span class="h">등록된</span> <span class="h">서명이</span> <span class="h">없습니다</span>.'</span>; <span class="m">?&gt;</span></div>
<div class="ln"><b class="no">49</b>            <span class="t">&lt;/p&gt;</span></div>
<div class="ln"><b class="no">50</b>        <span class="t">&lt;/div&gt;</span></div>
<div class="ln"><b class="no">51</b>        <span class="t">&lt;div</span> <span class="a">class</span>=<span class="s">"clearfix"</span><span class="t">&gt;</span><span class="t">&lt;/div&gt;</span></div>
<div class="ln"><b class="no">52</b>    <span class="t">&lt;/div&gt;</span></div>
<div class="ln"><b class="no">53</b><span class="t">&lt;/div&gt;</span></div>
</div></div>

<div id="status" class="abs">
 <div class="abs" id="stl">행<span class="w"> 19, </span>열<span class="w"> 23 </span><span class="w2">— 53 </span><span style="color:#bbb">행</span></div>
 <div class="cell" style="left:941px;width:37px">INS</div>
 <div class="cell" style="left:978px;width:80px;padding-right:12px">UTF-8<i class="dd"></i></div>
 <div class="cell" style="left:1058px;width:52px;padding-right:12px">PHP<i class="dd"></i></div>
 <div class="cell" style="left:1110px;width:34px"><i class="dot"></i></div>
 <div class="cell" style="left:1142.5px;width:81px;font-size:11.7px;color:#e8e8e8;font-weight:300;border-left:0">스페이스: 4</div>
</div>
<div class="abs" style="left:8px;top:1027px;width:250px;height:3px;background:#1a1d20"></div>
<div id="console" class="abs"><span class="abs" id="cst">SYNAPSE CONSOLE</span><span class="abs" id="csb">8</span><svg class="abs" style="left:133px;top:7.5px" width="9" height="6" viewBox="0 0 9 6"><path d="M.7 5.2 4.5 1.2 8.3 5.2" stroke="#3b4856" stroke-width="1.4" fill="none"/></svg></div>
<div class="abs" style="left:1402px;top:1005px;width:1px;height:25px;background:#343434"></div>
<div id="toolbar" class="abs">
<svg class="abs" style="left:0;top:0" width="30" height="140" viewBox="0 0 30 140">
<path fill="#bdbdbd" d="M4.2 31.9 11.9 21.7 18 26.3 26.2 20.6 19.5 31.1 13.3 27.2Z"/>
<path fill="#bdbdbd" d="M5.8 55.2Q5.8 54 7 54H8.9V52.4Q8.9 50.8 10.5 50.8H11.7Q13.3 50.8 13.3 52.4V54H16.6V52.4Q16.6 50.8 18.2 50.8H19.7Q21.3 50.8 21.3 52.4V54H22.8Q24 54 24 55.2V62.2Q24 63.4 22.8 63.4H7Q5.8 63.4 5.8 62.2Z"/>
<g stroke="#bdbdbd" fill="none"><path d="M12.6 85.6 23.4 96.2" stroke-width="2.7" stroke-linecap="round"/><path d="M12.3 85.3 14.9 87.9" stroke="#6a6c6d" stroke-width="1.1"/><path d="M12.1 79V82.4M6.1 85.2H9.4M15.4 85H18.6M12.1 88.8V91.4M7.7 81 10 83.4M15.3 80.4 13.9 82.5M8.4 89.4 10.1 87.6" stroke-width="1.15"/></g>
<rect x="6.2" y="110.2" width="17.8" height="17.4" rx="2.6" fill="#6fb2f6"/>
<path d="M23 110.6C15.2 110.4 17.4 117.8 16.2 122 15.2 125.6 12.4 127.4 7.6 125.4" stroke="#575c64" stroke-width="2" fill="none" stroke-linecap="round"/>
</svg>
</div>
</body>
</html>
